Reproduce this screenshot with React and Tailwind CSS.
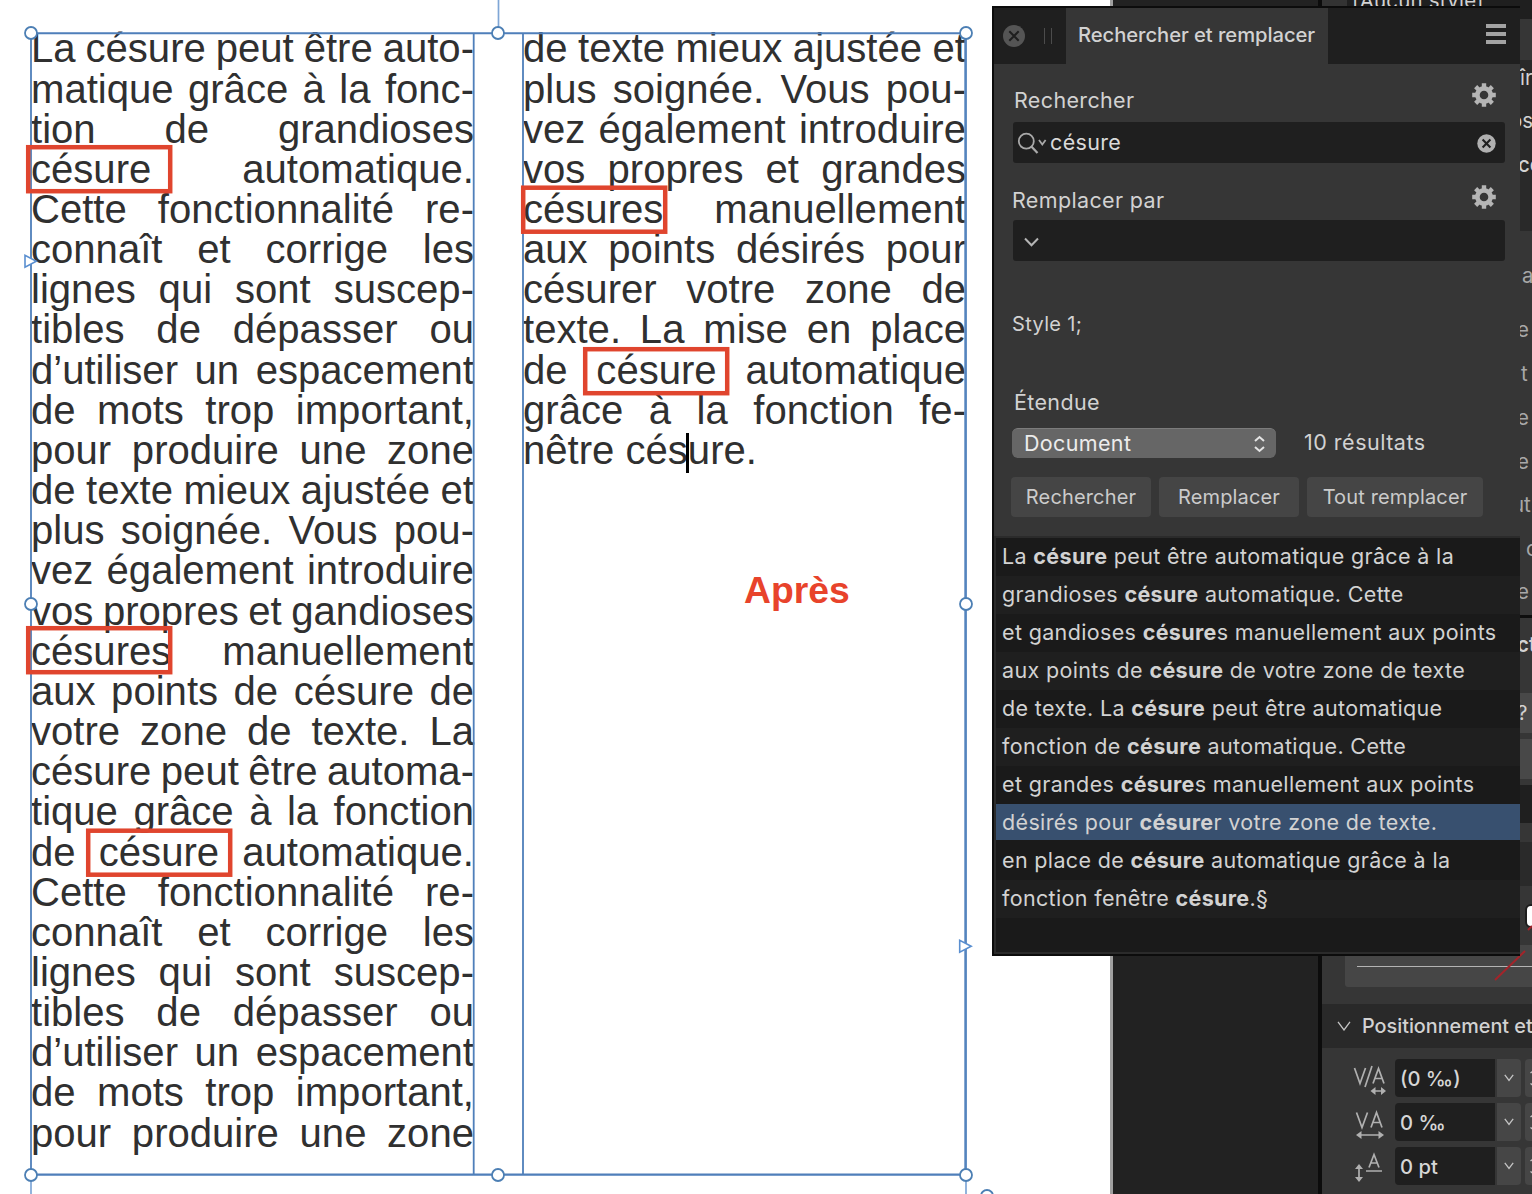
const leftColumn = [
  "La césure peut être auto-",
  "matique grâce à la fonc-",
  "tion de grandioses",
  "césure automatique.",
  "Cette fonctionnalité re-",
  "connaît et corrige les",
  "lignes qui sont suscep-",
  "tibles de dépasser ou",
  "d’utiliser un espacement",
  "de mots trop important,",
  "pour produire une zone",
  "de texte mieux ajustée et",
  "plus soignée. Vous pou-",
  "vez également introduire",
  "vos propres et gandioses",
  "césures manuellement",
  "aux points de césure de",
  "votre zone de texte. La",
  "césure peut être automa-",
  "tique grâce à la fonction",
  "de césure automatique.",
  "Cette fonctionnalité re-",
  "connaît et corrige les",
  "lignes qui sont suscep-",
  "tibles de dépasser ou",
  "d’utiliser un espacement",
  "de mots trop important,",
  "pour produire une zone",
];

const rightColumn = [
  "de texte mieux ajustée et",
  "plus soignée. Vous pou-",
  "vez également introduire",
  "vos propres et grandes",
  "césures manuellement",
  "aux points désirés pour",
  "césurer votre zone de",
  "texte. La mise en place",
  "de césure automatique",
  "grâce à la fonction fe-",
];

const results = [
  ["La ", "césure", " peut être automatique grâce à la"],
  ["grandioses ", "césure", " automatique. Cette"],
  ["et gandioses ", "césure", "s manuellement aux points"],
  ["aux points de ", "césure", " de votre zone de texte"],
  ["de texte. La ", "césure", " peut être automatique"],
  ["fonction de ", "césure", " automatique. Cette"],
  ["et grandes ", "césure", "s manuellement aux points"],
  ["désirés pour ", "césure", "r votre zone de texte."],
  ["en place de ", "césure", " automatique grâce à la"],
  ["fonction fenêtre ", "césure", ".§"],
];

const handles = [
  [31, 33],
  [498, 33],
  [966, 33],
  [31, 604],
  [966, 604],
  [31, 1175],
  [498, 1175],
  [966, 1175],
  [987, 1196],
];

const marks = [
  [28.2, 147.2],
  [523.2, 187.7],
  [585.2, 349.2],
  [28.2, 628.2],
  [88.2, 830.7],
];

function Column({ lines, children }) {
  return (
    <div className="w-[443px] shrink-0">
      {lines.map((line, i) => (
        <p
          key={i}
          className="h-[40.17px] leading-[40.17px] whitespace-nowrap [text-align-last:justify] [word-spacing:-2.5px]"
        >
          {line}
        </p>
      ))}
      {children}
    </div>
  );
}

function FrameOverlay() {
  return (
    <svg
      className="absolute left-0 top-0"
      width="1110"
      height="1194"
      fill="none"
    >
      <path d="M498.5 0V27M31 1181V1194M966 1181V1194" stroke="#7fa6d6" strokeWidth="1.7" />
      <path d="M31 33.2H966M31 1174.6H966" stroke="#4f7fba" strokeWidth="2.1" />
      <path
        d="M31 33V1175M473.7 33V1175M523 33V1175"
        stroke="#4f7fba"
        strokeWidth="1.8"
      />
      <path d="M965.6 33V1175" stroke="#5484be" strokeWidth="2.6" />
      {handles.map(([x, y]) => (
        <circle
          key={`${x}-${y}`}
          cx={x}
          cy={y}
          r="6"
          fill="#fff"
          stroke="#4c7fb4"
          strokeWidth="1.8"
        />
      ))}
      <path
        d="M25 255.3V267.2L36.3 261.2ZM959.7 940.3V952.2L971.2 946.2Z"
        fill="#fff"
        stroke="#5a8fd0"
        strokeWidth="1.6"
      />
      {marks.map(([x, y]) => (
        <rect
          key={`${x}-${y}`}
          x={x}
          y={y}
          width="142"
          height="44"
          stroke="#e0452e"
          strokeWidth="4.5"
        />
      ))}
    </svg>
  );
}

function Canvas() {
  return (
    <div className="relative w-[1113px] shrink-0 overflow-hidden border-r-[3px] border-[#a0a0a0] bg-white">
      <div className="flex gap-[49px] pl-[31px] pt-[28.4px] font-['Liberation_Sans',sans-serif] text-[40.1px] text-[#303030]">
        <Column lines={leftColumn} />
        <Column lines={rightColumn}>
          <p className="h-[40.17px] leading-[40.17px] whitespace-nowrap">
            nêtre cés
            <span className="relative">
              <span className="absolute -left-[2px] top-[5px] h-[40px] w-[3px] bg-black" />
              ure.
            </span>
          </p>
        </Column>
      </div>
      <FrameOverlay />
      <span className="absolute left-[744px] top-[568px] font-['Liberation_Sans',sans-serif] text-[37.3px] leading-[44px] font-bold text-[#e8432b]">
        Après
      </span>
    </div>
  );
}

function GearIcon() {
  return (
    <svg width="24" height="24" viewBox="0 0 24 24" fill="none" stroke="#b5b5b5">
      <circle cx="12" cy="12" r="6.6" strokeWidth="4.6" />
      {[0, 45, 90, 135].map((angle) => (
        <path
          key={angle}
          d="M12 0.2V4.5M12 19.5V23.8"
          strokeWidth="4.4"
          transform={`rotate(${angle} 12 12)`}
        />
      ))}
    </svg>
  );
}

function ActionButton({ className, children }) {
  return (
    <button
      className={`h-10 rounded bg-[#454545] text-[20px] tracking-[0.15px] text-[#cbcbcb] ${className}`}
    >
      {children}
    </button>
  );
}

function FindPanel() {
  return (
    <div className="absolute left-[992px] top-[6px] flex h-[950px] w-[528px] flex-col border-y-2 border-l-2 border-[#0c0c0c] bg-[#363636] text-[21.5px] tracking-[0.35px] text-[#d2d2d2]">
      <div className="flex h-14 shrink-0 bg-[#1f1f1f]">
        <div className="flex w-[72px] items-center pl-[9px]">
          <svg width="22" height="22" viewBox="0 0 22 22">
            <circle cx="11" cy="11" r="11" fill="#555" />
            <path d="M6.3 6.3L15.7 15.7M15.7 6.3L6.3 15.7" stroke="#1f1f1f" strokeWidth="2" />
          </svg>
          <div className="ml-[19px] h-4 w-2 border-x-[1.5px] border-[#4c4c4c]" />
        </div>
        <div className="w-[262px] bg-[#363636] pl-3 text-[20.2px] leading-[54px] font-medium tracking-[-0.05px] whitespace-nowrap">
          Rechercher et remplacer
        </div>
        <div className="ml-auto mr-[14px] mt-4 flex flex-col gap-1">
          <div className="h-1 w-5 bg-[#a3a3a3]" />
          <div className="h-1 w-5 bg-[#a3a3a3]" />
          <div className="h-1 w-5 bg-[#a3a3a3]" />
        </div>
      </div>

      <div className="flex h-[472px] shrink-0 flex-col pl-[17px] pr-[15px] pt-[16px]">
        <div className="flex h-[42px] items-start justify-between pl-[3px] pr-[9px] pt-[3px]">
          <span className="mt-[2px] leading-[30px]">Rechercher</span>
          <GearIcon />
        </div>
        <div className="ml-[2px] flex h-[41px] items-center rounded-[3px] bg-[#1f1f1f] pl-1 pr-[9px]">
          <svg width="31" height="24" viewBox="0 0 31 24" fill="none" stroke="#a9a9a9">
            <circle cx="9.3" cy="10.2" r="7.5" strokeWidth="1.8" />
            <path d="M14.6 15.7L20.5 22" strokeWidth="2.2" />
            <path d="M22 9L25.3 13.5L28.6 9" strokeWidth="1.8" />
          </svg>
          <span className="ml-[2px] pb-[2px] leading-[30px] text-[#dadada]">césure</span>
          <svg className="ml-auto mt-[2px]" width="19" height="19" viewBox="0 0 19 19">
            <circle cx="9.5" cy="9.5" r="9.2" fill="#b0b0b0" />
            <path d="M5.6 5.6L13.4 13.4M13.4 5.6L5.6 13.4" stroke="#1f1f1f" strokeWidth="2.1" />
          </svg>
        </div>
        <div className="mt-[20px] flex h-[37px] items-start justify-between pl-px pr-[9px] pt-[2px]">
          <span className="leading-[30px]">Remplacer par</span>
          <GearIcon />
        </div>
        <div className="ml-[2px] flex h-[41px] items-center rounded-[3px] bg-[#1f1f1f] pl-[11px]">
          <svg className="mt-[2px]" width="15" height="10" viewBox="0 0 15 10" fill="none">
            <path d="M1 1.5L7.5 8.2L14 1.5" stroke="#b5b5b5" strokeWidth="2" />
          </svg>
        </div>
        <div className="mt-[48px] pl-px text-[20px] leading-[30px]">Style 1;</div>
        <div className="mt-[48px] pl-[3px] leading-[30px]">Étendue</div>
        <div className="mt-[11px] flex items-center">
          <div className="ml-px flex h-[30px] w-[264px] items-center justify-between rounded-[6px] border-t border-[#7c7c7c] bg-[#666] pl-3 pr-[11px] text-[#ececec]">
            Document
            <svg width="11" height="18" viewBox="0 0 11 18" fill="none" stroke="#e4e4e4" strokeWidth="2">
              <path d="M1 6L5.5 2L10 6M1 12L5.5 16L10 12" />
            </svg>
          </div>
          <span className="ml-7 leading-[28px] -mt-[2px] tracking-[0.5px]">10 résultats</span>
        </div>
        <div className="mt-[19px] flex gap-2">
          <ActionButton className="w-[140px]">Rechercher</ActionButton>
          <ActionButton className="w-[140px]">Remplacer</ActionButton>
          <ActionButton className="w-[176px]">Tout remplacer</ActionButton>
        </div>
      </div>

      <div className="flex-1 border-b-2 border-l-2 border-t-2 border-[#2b2b2b] bg-[#1a1a1a]">
        {results.map(([before, match, after], i) => (
          <div
            key={i}
            className={`flex h-[38px] items-center pl-[6px] ${
              i === 7
                ? "border-b-2 border-[#1a1a1a] bg-[#38506f]"
                : i % 2
                ? "bg-[#1f1f1f] pb-[2px]"
                : "bg-[#1a1a1a] pb-[2px]"
            }`}
          >
            <span className="whitespace-pre">
              {before}
              <b>{match}</b>
              {after}
            </span>
          </div>
        ))}
      </div>
    </div>
  );
}

function StudioRow({ text, className }) {
  return (
    <div className={`flex items-center whitespace-nowrap ${className}`}>
      {text}
    </div>
  );
}

function MetricRow({ icon, value }) {
  return (
    <div className="flex h-[38px] shrink-0 pl-[28px]">
      <svg
        className="mr-[5px] shrink-0"
        width="40"
        height="38"
        fill="none"
        stroke="#b0b0b0"
        strokeWidth="1.7"
      >
        {icon}
      </svg>
      <div className="flex w-[100px] shrink-0 items-center rounded-l-[4px] bg-[#1f1f1f] pl-[5px] pt-[2px] text-[20.2px] font-medium text-[#d6d6d6]">
        {value}
      </div>
      <div className="ml-[2px] flex w-6 shrink-0 items-center justify-center rounded-r-[4px] bg-[#464646]">
        <svg width="10" height="8" fill="none" stroke="#c4c4c4" strokeWidth="1.3">
          <path d="M0.8 0.8L5 6.4L9.2 0.8" />
        </svg>
      </div>
      <div className="ml-1 flex w-6 shrink-0 flex-col justify-center gap-[9px] rounded-l-[4px] bg-[#464646] pl-[5px]">
        <svg width="10" height="5" fill="none" stroke="#c4c4c4" strokeWidth="1.4">
          <path d="M0.5 4L5 0.5L9.5 4" />
        </svg>
        <svg width="10" height="5" fill="none" stroke="#c4c4c4" strokeWidth="1.4">
          <path d="M0.5 0.5L5 4L9.5 0.5" />
        </svg>
      </div>
    </div>
  );
}

function StudioPanel() {
  return (
    <div className="relative flex w-[210px] shrink-0 flex-col overflow-hidden bg-[#363636] text-[20.5px] text-[#d2d2d2]">
      <div className="flex h-[19px] shrink-0 bg-[#1f1f1f]">
        <div className="w-[25px] bg-[#333]" />
        <span className="-mt-[13px] ml-[5px] h-7 leading-7 tracking-[0.2px]">[Aucun style]</span>
      </div>
      <div className="h-[41px] shrink-0" />
      <div className="h-[171px] shrink-0 bg-[#292929]">
        <StudioRow text="îr" className="mb-[2px] h-[37px] pl-[198px]" />
        <StudioRow text="os" className="h-11 pl-[188px]" />
        <StudioRow text="ce" className="h-11 pl-[196px] font-medium" />
      </div>
      <div className="h-[384px] shrink-0 pt-[23px] text-[#a8a8a8]">
        <StudioRow text="a" className="mb-[10px] h-11 pl-[200px]" />
        <StudioRow text="e" className="h-11 pl-[195px]" />
        <StudioRow text="t" className="h-11 pl-[199px]" />
        <StudioRow text="e" className="h-11 pl-[195px]" />
        <StudioRow text="e" className="h-11 pl-[195px]" />
        <StudioRow text="ut" className="mb-[2px] h-[42px] pl-[190px]" />
        <StudioRow text="c" className="h-[42px] pl-[204px]" />
        <StudioRow text="e" className="h-11 pl-[195px]" />
      </div>
      <div className="h-[3px] shrink-0 bg-[#0e0e0e]" />
      <div className="h-[75px] shrink-0 pt-[5px] font-semibold">
        <StudioRow text="ct" className="h-11 pl-[195px]" />
      </div>
      <div className="flex h-10 shrink-0 items-center bg-[#484848] pl-[195px]">?</div>
      <div className="mt-[6px] h-10 shrink-0 bg-[#484848]" />
      <div className="mt-[6px] h-[38px] shrink-0 bg-[#1f1f1f]" />
      <div className="mt-[19px] h-11 shrink-0 bg-[#2a2a2a]" />
      <div className="h-[59px] shrink-0 pl-[203px] pt-[18px]">
        <div className="h-6 w-6 rounded-[6px] border-2 border-[#1d1d1d] bg-white" />
      </div>
      <div className="ml-[23px] h-[42px] shrink-0 rounded-bl-[3px] bg-[#464646] pl-3 pt-[21px]">
        <div className="h-px bg-[#b4b4b4]" />
      </div>
      <svg className="absolute left-[160px] top-[915px]" width="50" height="70">
        <path d="M13 65L43 36M46 15L50 11" stroke="#a3242a" strokeWidth="2" />
      </svg>
      <div className="mt-[17px] flex h-11 shrink-0 items-center bg-[#292929] pl-[15px] text-[19.8px] font-medium whitespace-nowrap">
        <svg className="mr-[11px] shrink-0" width="14" height="10" fill="none" stroke="#c4c4c4" strokeWidth="1.3">
          <path d="M1 0.8L7 9L13 0.8" />
        </svg>
        <span className="pt-[2px]">Positionnement et</span>
      </div>
      <div className="flex flex-col gap-[6px] pt-[11px]">
        <MetricRow
          value="(0 ‰)"
          icon={
            <>
              <path d="M4.5 9L10 24.5L15.5 9M22 7L15 28M23 24.5L28.5 9.5L34 24.5M25 19.5H32M23 32H33" />
              <path d="M20.5 32L25.5 28V36ZM36 32L31 28V36Z" fill="#b0b0b0" stroke="none" />
            </>
          }
        />
        <MetricRow
          value="0 ‰"
          icon={
            <>
              <path d="M6.5 9.5L12 24.5L17.5 9.5M21 24.5L26.5 9.5L32 24.5M23 19.5H30M9 32H31" />
              <path d="M6 32L11.5 28V36ZM34 32L28.5 28V36Z" fill="#b0b0b0" stroke="none" />
            </>
          }
        />
        <MetricRow
          value="0 pt"
          icon={
            <>
              <path d="M19 20.5L24 7.5L29 20.5M21 16H27M16 24H32M9 20V32" />
              <path d="M9 17L13 22H5ZM9 35L13 30H5Z" fill="#b0b0b0" stroke="none" />
            </>
          }
        />
      </div>
    </div>
  );
}

export default function App() {
  return (
    <div className="relative flex h-[1194px] w-[1532px] overflow-hidden bg-[#222] font-['Inter',sans-serif]">
      <Canvas />
      <div className="w-[209px] shrink-0 border-r-4 border-[#0c0c0c] bg-[#222]" />
      <StudioPanel />
      <FindPanel />
    </div>
  );
}
